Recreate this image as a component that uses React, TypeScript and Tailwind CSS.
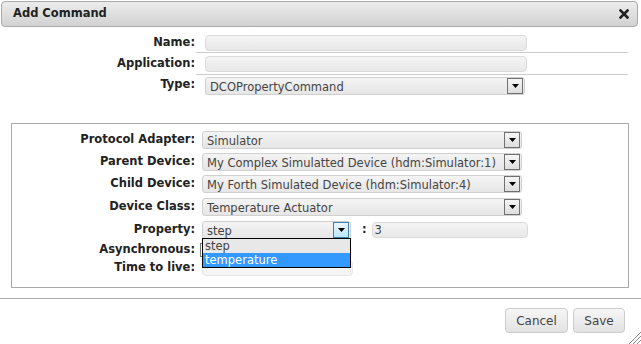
import type { ReactNode } from 'react';

const font = { fontFamily: '"DejaVu Sans", Verdana, sans-serif' };

function Arrow({ hover }: { hover?: boolean }) {
  return (
    <div
      className={`ml-auto mr-[1px] flex h-[16px] w-[16px] shrink-0 items-center justify-center border ${
        hover ? 'border-[#3c7fb1] bg-gradient-to-b from-[#eaf6fd] to-[#bee6fd]' : 'border-[#707070] bg-gradient-to-b from-[#f6f6f6] to-[#dedede]'
      }`}
    >
      <svg width="7" height="4" viewBox="0 0 7 4">
        <path d="M0 0h7L3.5 4z" fill="#000" />
      </svg>
    </div>
  );
}

function Select({ value, w, hover }: { value: string; w: string; hover?: boolean }) {
  return (
    <div
      className={`flex h-[18px] items-center rounded-[3px] border border-[#d0d0d0] bg-gradient-to-b from-[#f4f4f4] to-[#e6e6e6] pl-[4px] text-[11.5px] text-[#444] ${w}`}
    >
      <span className="whitespace-nowrap pt-[1px] leading-[16px]">{value}</span>
      <Arrow hover={hover} />
    </div>
  );
}

function Input({ w, value }: { w: string; value?: string }) {
  return (
    <div
      className={`flex h-[16px] items-center rounded-[4px] border border-[#dadada] bg-gradient-to-b from-[#f4f4f4] to-[#e8e8e8] pl-[2px] text-[11.5px] leading-[14px] text-[#444] ${w}`}
    >
      {value}
    </div>
  );
}

function TopRow({ label, children, cls }: { label: string; children: ReactNode; cls: string }) {
  return (
    <div className="flex items-center">
      <div className="w-[196px] pr-[1px] text-right text-[11.5px] font-bold text-[#222]">{label}</div>
      <div className={`mr-[13px] flex-1 pl-[9px] ${cls}`}>{children}</div>
    </div>
  );
}

function Row({ label, children, cls }: { label: string; children: ReactNode; cls: string }) {
  return (
    <div className={`flex items-center ${cls}`}>
      <div className="w-[183px] text-right text-[11.5px] font-bold text-[#222]">{label}</div>
      <div className="ml-[7px] flex items-center">{children}</div>
    </div>
  );
}

export default function App() {
  return (
    <div className="relative h-[344px] w-[641px] overflow-hidden bg-white" style={font}>
      <div className="mx-[1px] mt-[1px] mr-[3px] flex h-[26px] items-center justify-between rounded-[4px] border border-[#aaa] bg-gradient-to-b from-[#ececec] to-[#d2d2d2] pl-[11px] pr-[8px]">
        <span className="text-[11.5px] font-bold text-[#222]">Add Command</span>
        <svg width="10" height="10" viewBox="0 0 10 10">
          <path d="M1.5 1.5l7 7M8.5 1.5l-7 7" stroke="#222" strokeWidth="2.6" strokeLinecap="square" />
        </svg>
      </div>

      <div className="mt-[5px] flex flex-col">
        <TopRow label="Name:" cls="border-b border-[#ccc] pt-[3px] pb-[1px]">
          <Input w="w-[322px]" />
        </TopRow>
        <TopRow label="Application:" cls="border-b border-[#ccc] pt-[3px] pb-[2px]">
          <Input w="w-[322px]" />
        </TopRow>
        <TopRow label="Type:" cls="pt-[2px]">
          <Select value="DCOPropertyCommand" w="w-[320px]" />
        </TopRow>
      </div>

      <div className="ml-[11px] mr-[12px] mt-[28px] flex h-[165px] flex-col border border-[#aaa] pt-[7px]">
        <Row label="Protocol Adapter:" cls="">
          <Select value="Simulator" w="w-[320px]" />
        </Row>
        <Row label="Parent Device:" cls="mt-[4px]">
          <Select value="My Complex Simulatted Device (hdm:Simulator:1)" w="w-[320px]" />
        </Row>
        <Row label="Child Device:" cls="mt-[4px]">
          <Select value="My Forth Simulated Device (hdm:Simulator:4)" w="w-[320px]" />
        </Row>
        <Row label="Device Class:" cls="mt-[5px]">
          <Select value="Temperature Actuator" w="w-[320px]" />
        </Row>
        <Row label="Property:" cls="mt-[5px]">
          <div className="relative">
            <Select value="step" w="w-[149px]" hover />
            <div className="absolute left-0 top-[17px] z-10 w-[149px] border border-black bg-white text-[11.5px] leading-[14px]">
              <div className="h-[14px] bg-[#e8e8e8] pl-[2px] text-[#444]">step</div>
              <div className="h-[14px] bg-[#3399ff] pl-[2px] text-white">temperature</div>
            </div>
          </div>
          <span className="ml-[11px] text-[11.5px] font-bold text-[#222]">:</span>
          <div className="ml-[5px]">
            <Input w="w-[156px]" value="3" />
          </div>
        </Row>
        <Row label="Asynchronous:" cls="mt-[3px] h-[16px]">
          <div className="-ml-[2px] h-[14px] w-[13px] border border-[#777] bg-white" />
        </Row>
        <Row label="Time to live:" cls="mt-[2px] h-[16px]">
          <div className="h-[16px] w-[151px] rounded-[4px] border border-[#e8e8e8] bg-[#f5f5f5]" />
        </Row>
      </div>

      <div className="mt-[10px] flex justify-end gap-[5px] border-t border-[#aaa] pr-[16px] pt-[9px]">
        <button className="h-[25px] w-[63px] rounded-[4px] border border-[#ccc] bg-gradient-to-b from-[#f6f6f6] to-[#e2e2e2] text-[12px] text-[#444]">
          Cancel
        </button>
        <button className="h-[25px] w-[52px] rounded-[4px] border border-[#ccc] bg-gradient-to-b from-[#f6f6f6] to-[#e2e2e2] text-[12px] text-[#444]">
          Save
        </button>
      </div>

      <svg className="absolute bottom-0 right-0" width="13" height="13" viewBox="0 0 13 13">
        <path d="M13 1L1 13M13 5L5 13M13 9L9 13" stroke="#888" strokeWidth="1" />
      </svg>
    </div>
  );
}
